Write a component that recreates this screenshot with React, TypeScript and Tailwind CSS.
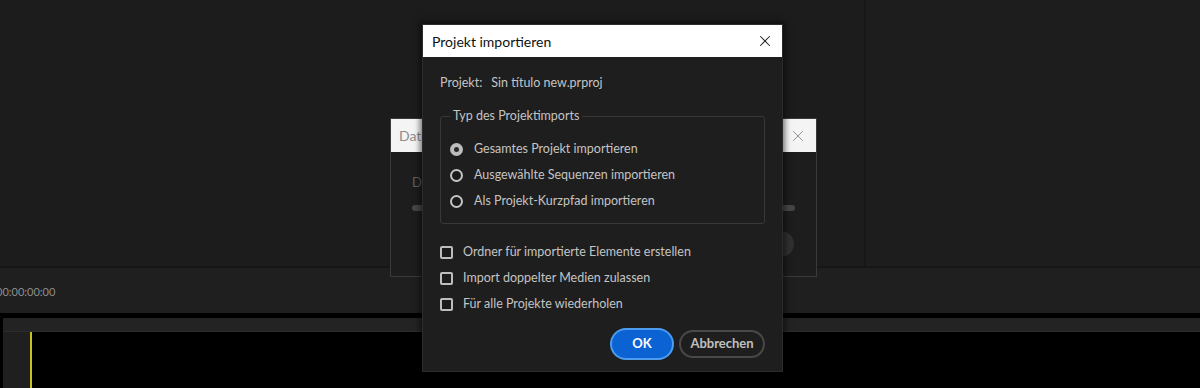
import { X } from 'lucide-react';

function Radio({ checked, label }: { checked?: boolean; label: string }) {
  return (
    <div className="flex h-[20px] items-center gap-[11px]">
      {checked ? (
        <span className="flex h-[13px] w-[13px] items-center justify-center rounded-full bg-[#bdbdbd]">
          <span className="h-[5px] w-[5px] rounded-full bg-[#2a2a2a]" />
        </span>
      ) : (
        <span className="h-[13px] w-[13px] rounded-full border-2 border-[#c4c4c4] bg-[#1b1b1b]" />
      )}
      <span>{label}</span>
    </div>
  );
}

function Check({ label }: { label: string }) {
  return (
    <div className="flex h-[20px] items-center gap-[10px]">
      <span className="h-[13px] w-[13px] rounded-[2px] border-2 border-[#bdbdbd] bg-[#1b1b1b]" />
      <span>{label}</span>
    </div>
  );
}

export default function App() {
  return (
    <div
      className="relative h-[388px] w-[1200px] overflow-hidden bg-[#1c1c1c]"
      style={{ fontFamily: 'Lato, "Noto Sans", sans-serif' }}
    >
      {/* top panels */}
      <div className="flex h-[268px] border-b-2 border-[#161616]">
        <div className="w-[866px] border-r-2 border-[#171717]" />
        <div className="flex-1 bg-[#1d1d1d]" />
      </div>

      {/* timecode bar */}
      <div className="flex h-[45px] items-center bg-[#1f1f1f] pt-[4px]">
        <span className="ml-[-4px] text-[11px] text-[#8e8e8e]">00:00:00:00</span>
      </div>
      <div className="h-[5px] bg-black" />

      {/* timeline */}
      <div className="flex h-[70px]">
        <div className="w-[3px] bg-black" />
        <div className="flex flex-1 flex-col bg-[#202020]">
          <div className="h-[14px] border-b border-[#2d2d2d] bg-[#232323]" />
          <div className="flex flex-1">
            <div className="w-[27px] bg-[#1f1f1f]" />
            <div className="w-[2px] bg-[#c9c21e]" />
            <div className="flex-1 bg-black" />
          </div>
        </div>
      </div>

      {/* background dialog */}
      <div className="absolute left-[390px] top-[118px] flex h-[159px] w-[427px] flex-col border border-[#3a3a3a] bg-[#1d1d1d]">
        <div className="flex h-[33px] items-center justify-between bg-[#f4f4f4] pl-[8px] pr-[9px]">
          <span className="text-[14px] text-[#8c8c8c]">Dateien importieren</span>
          <X className="h-[18px] w-[18px] text-[#8a8a8a]" strokeWidth={1.2} />
        </div>
        <div className="flex flex-1 flex-col px-[21px]">
          <span className="mt-[21px] text-[13px] text-[#5e5e5e]">Dateien werden importiert</span>
          <div className="mt-[12px] h-[6px] rounded-full bg-[#464646]" />
          <div className="mt-[20px] flex justify-end">
            <div className="mr-[1px] h-[26px] w-[26px] rounded-full bg-[#303030]" />
          </div>
        </div>
      </div>

      {/* main dialog */}
      <div className="absolute left-[422px] top-[24px] flex h-[348px] w-[361px] flex-col border border-[#2c2c2c] bg-[#1e1e1e] shadow-[0_0_6px_2px_rgba(0,0,0,0.55)]">
        <div className="flex h-[32px] items-center justify-between bg-white pl-[9px] pr-[8px]">
          <span className="text-[14px] text-[#111]">Projekt importieren</span>
          <X className="h-[18px] w-[18px] text-[#222]" strokeWidth={1.4} />
        </div>

        <div className="flex flex-col px-[17px] text-[12.5px] text-[#c4c4c4]">
          <div className="mt-[16px] flex h-[20px] items-center gap-[9px]">
            <span>Projekt:</span>
            <span>Sin título new.prproj</span>
          </div>

          <fieldset className="mt-[13px] rounded-[3px] border border-[#383838] px-[9px] pb-[12px]">
            <legend className="h-[20px] px-[3px] leading-[20px]">Typ des Projektimports</legend>
            <div className="mt-[13px] flex flex-col gap-[6px]">
              <Radio checked label="Gesamtes Projekt importieren" />
              <Radio label="Ausgewählte Sequenzen importieren" />
              <Radio label="Als Projekt-Kurzpfad importieren" />
            </div>
          </fieldset>

          <div className="mt-[18px] flex flex-col gap-[6px]">
            <Check label="Ordner für importierte Elemente erstellen" />
            <Check label="Import doppelter Medien zulassen" />
            <Check label="Für alle Projekte wiederholen" />
          </div>

          <div className="mt-[16px] flex justify-end gap-[7px]">
            <button className="h-[28px] w-[60px] rounded-full bg-[#0b62d2] text-[13px] font-bold text-white ring-2 ring-[#4d9cf0]">
              OK
            </button>
            <button className="h-[28px] w-[86px] rounded-full border-2 border-[#494949] text-[13px] font-bold text-[#c0c0c0]">
              Abbrechen
            </button>
          </div>
        </div>
      </div>
    </div>
  );
}
